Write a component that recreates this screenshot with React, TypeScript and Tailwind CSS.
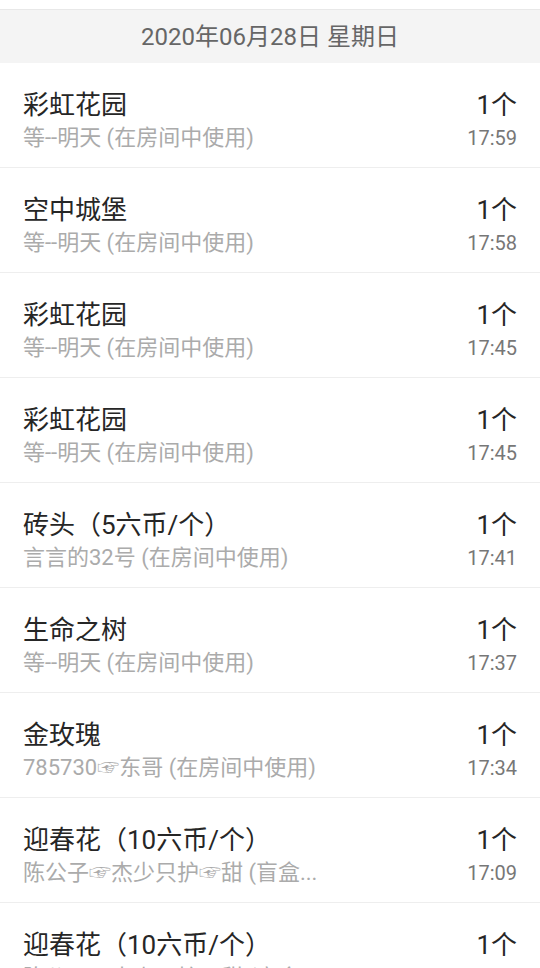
import React from "react";

type Row = { title: string; sub: string; count: string; time: string };

const rows: Row[] = [
  { title: "彩虹花园", sub: "等--明天 (在房间中使用)", count: "1个", time: "17:59" },
  { title: "空中城堡", sub: "等--明天 (在房间中使用)", count: "1个", time: "17:58" },
  { title: "彩虹花园", sub: "等--明天 (在房间中使用)", count: "1个", time: "17:45" },
  { title: "彩虹花园", sub: "等--明天 (在房间中使用)", count: "1个", time: "17:45" },
  { title: "砖头（5六币/个）", sub: "言言的32号 (在房间中使用)", count: "1个", time: "17:41" },
  { title: "生命之树", sub: "等--明天 (在房间中使用)", count: "1个", time: "17:37" },
  { title: "金玫瑰", sub: "785730☞东哥 (在房间中使用)", count: "1个", time: "17:34" },
  { title: "迎春花（10六币/个）", sub: "陈公子☞杰少只护☞甜 (盲盒...", count: "1个", time: "17:09" },
  { title: "迎春花（10六币/个）", sub: "陈公子☞杰少只护☞甜 (盲盒...", count: "1个", time: "17:05" },
];

export default function App() {
  return (
    <div
      className="w-[540px] h-[968px] overflow-hidden bg-white"
      style={{ fontFamily: "Roboto, 'Noto Sans CJK SC', sans-serif" }}
    >
      <div className="h-[10px] bg-white border-b border-[#e8e8e8]" />
      <div className="h-[53px] bg-[#f4f4f4] flex items-center justify-center">
        <span className="text-[24px] leading-[30px] text-[#666666]">2020年06月28日 星期日</span>
      </div>
      {rows.map((r, i) => (
        <div
          key={i}
          className="flex items-start justify-between pl-[23px] pr-[23px] pt-[26px] pb-[14px] border-b border-[#eeeeee]"
        >
          <div className="flex flex-col min-w-0">
            <div className="text-[26px] leading-[32px] text-[#262626] whitespace-nowrap">{r.title}</div>
            <div className="text-[22px] leading-[30px] mt-[2px] text-[#ababab] whitespace-nowrap">{r.sub}</div>
          </div>
          <div className="flex flex-col items-end shrink-0">
            <div className="text-[26px] leading-[32px] text-[#262626]">{r.count}</div>
            <div className="text-[20px] leading-[30px] mt-[2px] text-[#777777]">{r.time}</div>
          </div>
        </div>
      ))}
    </div>
  );
}
